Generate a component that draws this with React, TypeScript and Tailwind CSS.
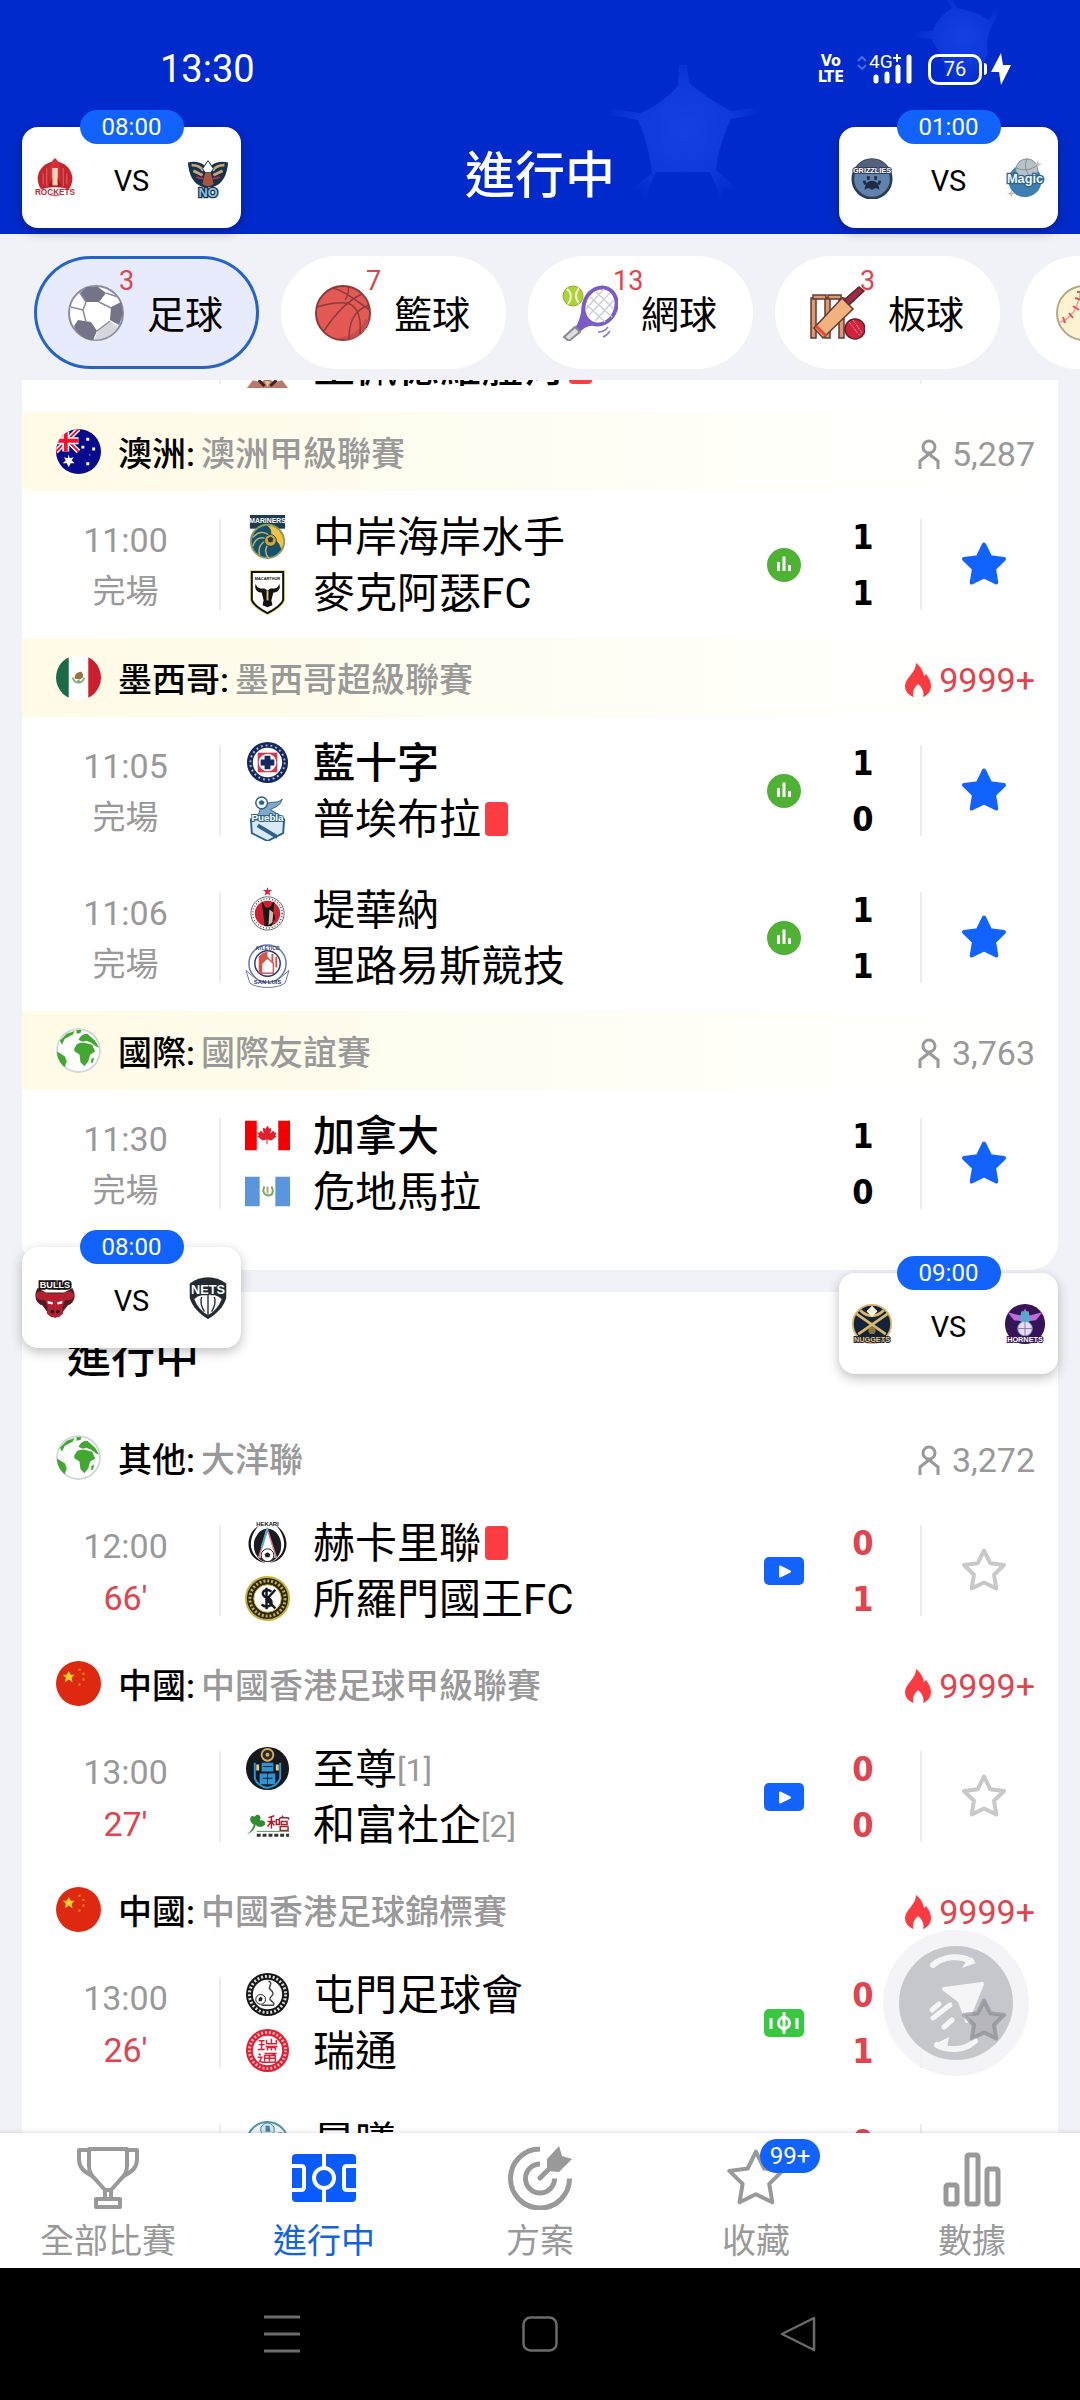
import type { ReactNode } from 'react'

type Team = { name: string; logo: string; bold?: boolean; redCard?: boolean; rank?: number; score: number }
type Match = { time: string; status: string; live?: boolean; media?: 'stats' | 'video' | 'pitch'; starred?: boolean; home: Team; away: Team }
type League = { flag: string; country: string; name: string; fans: string; hot?: boolean; pinned?: boolean; matches: Match[] }

const finished: League[] = [
  {
    flag: 'australia', country: '澳洲', name: '澳洲甲級聯賽', fans: '5,287', pinned: true,
    matches: [
      {
        time: '11:00', status: '完場', media: 'stats', starred: true,
        home: { name: '中岸海岸水手', logo: 'mariners', score: 1 },
        away: { name: '麥克阿瑟FC', logo: 'macarthur', score: 1 },
      },
    ],
  },
  {
    flag: 'mexico', country: '墨西哥', name: '墨西哥超級聯賽', fans: '9999+', hot: true, pinned: true,
    matches: [
      {
        time: '11:05', status: '完場', media: 'stats', starred: true,
        home: { name: '藍十字', logo: 'cruzazul', bold: true, score: 1 },
        away: { name: '普埃布拉', logo: 'puebla', redCard: true, score: 0 },
      },
      {
        time: '11:06', status: '完場', media: 'stats', starred: true,
        home: { name: '堤華納', logo: 'tijuana', score: 1 },
        away: { name: '聖路易斯競技', logo: 'sanluis', score: 1 },
      },
    ],
  },
  {
    flag: 'globe', country: '國際', name: '國際友誼賽', fans: '3,763', pinned: true,
    matches: [
      {
        time: '11:30', status: '完場', starred: true,
        home: { name: '加拿大', logo: 'canada', bold: true, score: 1 },
        away: { name: '危地馬拉', logo: 'guatemala', score: 0 },
      },
    ],
  },
]

const live: League[] = [
  {
    flag: 'globe', country: '其他', name: '大洋聯', fans: '3,272',
    matches: [
      {
        time: '12:00', status: "66'", live: true, media: 'video',
        home: { name: '赫卡里聯', logo: 'hekari', redCard: true, score: 0 },
        away: { name: '所羅門國王FC', logo: 'solomon', score: 1 },
      },
    ],
  },
  {
    flag: 'china', country: '中國', name: '中國香港足球甲級聯賽', fans: '9999+', hot: true,
    matches: [
      {
        time: '13:00', status: "27'", live: true, media: 'video',
        home: { name: '至尊', logo: 'supreme', rank: 1, score: 0 },
        away: { name: '和富社企', logo: 'wofoo', rank: 2, score: 0 },
      },
    ],
  },
  {
    flag: 'china', country: '中國', name: '中國香港足球錦標賽', fans: '9999+', hot: true,
    matches: [
      {
        time: '13:00', status: "26'", live: true, media: 'pitch',
        home: { name: '屯門足球會', logo: 'tuenmun', score: 0 },
        away: { name: '瑞通', logo: 'suitung', score: 1 },
      },
      {
        time: '13:30', status: "1'", live: true,
        home: { name: '晨曦', logo: 'sunhei', score: 0 },
        away: { name: '理文', logo: 'sunhei', score: 0 },
      },
    ],
  },
]

const previousMatch: Match = {
  time: '10:00', status: '完場',
  home: { name: '奧林匹亞', logo: 'pedro', score: 0 },
  away: { name: '聖佩德羅體育', logo: 'pedro', bold: true, redCard: true, score: 0 },
}

const badgeText = { fontFamily: 'Liberation Sans', fontWeight: 700, textAnchor: 'middle' as const }

const logos: Record<string, ReactNode> = {
  mariners: (
    <>
      <rect x="5" y="1" width="36" height="14" fill="#1d3d4d" />
      <text x="23" y="9" fontSize="7" fill="#fff" {...badgeText}>MARINERS</text>
      <circle cx="23" cy="28" r="17" fill="#17506a" stroke="#8b9a63" strokeWidth="2" />
      <path d="M23 12a16 16 0 0 1 14 24c-2-8-8-13-16-10 7-3 8-9 2-14z" fill="#f3c443" />
      <path d="M8 24c5-6 11-7 17-2M8 33c2-8 9-11 15-7M15 42c-2-7 1-13 8-15M24 45c-4-5-4-11 1-15" fill="none" stroke="#b8b46c" strokeWidth="1.500" />
      <circle cx="26" cy="27" r="6" fill="#d9a632" stroke="#1d3d4d" strokeWidth="1" />
      <path d="M26 23l3 2-1 4h-4l-1-4z" fill="#1d3d4d" />
    </>
  ),
  macarthur: (
    <>
      <path d="M6 1h34v29c0 5-8 11-17 15C14 41 6 35 6 30z" fill="#fff" stroke="#e8dd6a" strokeWidth="2" />
      <path d="M7 2h32v28c0 4-8 10-16 14C15 40 7 34 7 30z" fill="none" stroke="#111" strokeWidth="2" />
      <text x="23" y="10" fontSize="4" fill="#111" {...badgeText}>MACARTHUR</text>
      <path d="M11 14c1 5 5 5 9 5l3 2 3-2c4 0 8 0 9-5 2 6-2 9-6 9l-2 8 1 5-5 2-5-2 1-5-2-8c-4 0-8-3-6-9z" fill="#111" />
      <path d="M23 21v10" stroke="#d8b978" strokeWidth="2" />
    </>
  ),
  cruzazul: (
    <>
      <circle cx="23" cy="23" r="21" fill="#14285f" />
      <circle cx="23" cy="23" r="17.500" fill="none" stroke="#a9b3cf" strokeWidth="2" strokeDasharray="2 3" />
      <circle cx="23" cy="23" r="15" fill="#fff" />
      <rect x="13" y="13" width="20" height="20" fill="#d8364a" />
      <circle cx="23" cy="23" r="9" fill="#fff" />
      <path d="M20 16h6v4h4v6h-4v4h-6v-4h-4v-6h4z" fill="#14285f" />
    </>
  ),
  puebla: (
    <>
      <path d="M6 24h34l-1 14-16 8-16-8z" fill="#d9eaf5" stroke="#2c628c" strokeWidth="2" />
      <path d="M13 30l20 12" stroke="#2c628c" strokeWidth="4" />
      <path d="M18 12c7-10 14-2 20-9-2 8-8 8-12 11l10 6H11c6-2 2-7 7-8z" fill="#7fa9c9" stroke="#2c628c" />
      <circle cx="17" cy="7" r="6" fill="#fff" stroke="#2c628c" strokeWidth="1.500" />
      <path d="M17 4l3 2-1 3h-4l-1-3z" fill="#2c628c" />
      <text x="23" y="26" fontSize="10" fill="#fff" stroke="#2c628c" strokeWidth="2" paintOrder="stroke" {...badgeText}>Puebla</text>
    </>
  ),
  tijuana: (
    <>
      <path d="M23 0l1 3h4l-3 2 1 4-3-2-3 2 1-4-3-2h4z" fill="#d32a3b" />
      <circle cx="23" cy="27" r="17" fill="#fff" stroke="#666" />
      <circle cx="23" cy="27" r="15" fill="none" stroke="#555" strokeWidth="1.500" strokeDasharray="1 2" />
      <circle cx="23" cy="27" r="13" fill="#d01f30" />
      <path d="M17 14l4 7h4l5-7-1 11 2 7-4 8h-7l-1-10z" fill="#171717" />
      <path d="M25 23l4 3-1 10-4 3z" fill="#d9b9a7" />
    </>
  ),
  sanluis: (
    <>
      <path d="M1 28l7 6c8 8 22 8 30 0l7-6-4 13c-8 6-28 6-36 0z" fill="#fff" stroke="#6674a8" />
      <circle cx="23" cy="21" r="19" fill="#fff" stroke="#6674a8" strokeWidth="1.500" />
      <circle cx="23" cy="21" r="13" fill="#fff" stroke="#27366f" strokeWidth="1.500" />
      <path d="M14 14a12 12 0 0 1 9-5v22h-9z" fill="#d65549" />
      <path d="M28 11v17M32 14v11" stroke="#d65549" strokeWidth="2" />
      <path d="M17 31V21l6-6 6 6v10z" fill="#fff" stroke="#c95a54" strokeWidth="1.500" />
      <text x="23" y="7" fontSize="5" fill="#27366f" {...badgeText}>ATLÉTICO</text>
      <text x="23" y="42" fontSize="6" fill="#27366f" {...badgeText}>SAN LUIS</text>
    </>
  ),
  canada: (
    <>
      <rect x="0" y="8" width="46" height="30" fill="#fff" />
      <path d="M0 8h12v30H0zM34 8h12v30H34z" fill="#f40000" />
      <path d="M23 13l2 3 2-1-1 6 3-3 1 2 2 0-1 3 1 1-5 4-4-1v5h-1v-5l-4 1-5-4 1-1-1-3h2l1-2 3 3-1-6 3 1z" fill="#e0202a" />
    </>
  ),
  guatemala: (
    <>
      <rect x="0" y="8" width="46" height="30" fill="#fff" />
      <path d="M0 8h15v30H0zM31 8h15v30H31z" fill="#5b95dc" />
      <path d="M20 18c-3 5 0 9 4 9s6-4 3-9" fill="none" stroke="#7aa75b" strokeWidth="2" />
      <path d="M23 18v7" stroke="#b9a26a" strokeWidth="2" />
    </>
  ),
  hekari: (
    <>
      <path d="M15 5C-2 15 0 41 21 44-2 34 6 13 15 5zM31 5c17 10 15 36-6 39C48 34 40 13 31 5z" fill="#161616" />
      <ellipse cx="23" cy="26" rx="14" ry="17" fill="#1c1b22" />
      <path d="M23 10l9 28H14z" fill="#fff" stroke="#d77b8b" strokeWidth="1.500" />
      <path d="M23 8l-6 20" stroke="#43b7cc" strokeWidth="2" />
      <circle cx="23" cy="36" r="6.500" fill="#fff" stroke="#222" />
      <path d="M23 33l3 2-1 3h-4l-1-3z" fill="#222" />
      <text x="23" y="6" fontSize="6" fill="#111" {...badgeText}>HEKARI</text>
    </>
  ),
  solomon: (
    <>
      <circle cx="23" cy="23" r="22" fill="#2b2812" stroke="#c6b23b" strokeWidth="2" />
      <circle cx="23" cy="23" r="18" fill="none" stroke="#c6b23b" strokeWidth="3" strokeDasharray="2 2" />
      <circle cx="23" cy="23" r="14" fill="#fff" stroke="#c6b23b" />
      <path d="M27 16c-5-4-11 0-8 4 2 3 7 2 8 6 1 5-6 7-10 3M22 12v22M31 14l-9 10 9 9" fill="none" stroke="#16181f" strokeWidth="2.500" />
    </>
  ),
  supreme: (
    <>
      <circle cx="23" cy="23" r="22" fill="#15181c" />
      <circle cx="23" cy="9" r="6" fill="#30291d" stroke="#d5ad6a" strokeWidth="2" />
      <circle cx="23" cy="9" r="2" fill="#d5ad6a" />
      <path d="M10 17v16c2 6 8 9 13 10 5-1 11-4 13-10V17" fill="none" stroke="#2c95d9" strokeWidth="2" />
      <path d="M17 17h12v9H17zM15 28h16v11H15z" fill="#2c95d9" />
      <path d="M13 19v6M33 19v6" stroke="#e9c98a" strokeWidth="3" />
      <path d="M18 21h10M18 33h10M23 28v11" stroke="#15181c" />
    </>
  ),
  wofoo: (
    <>
      <path d="M9 23C3 20 5 12 10 15c2-4 8-1 5 4 5-2 8 4 3 6-3 1-6 0-7-2-1 5-4 8-9 10 4-3 6-6 7-10z" fill="#2f8b2e" />
      <path d="M24 16l6-2M27 15v12M23 20h8M27 20l-4 5M27 20l3 4M32 18h3v5h-3zM38 14l1 2M35 18l1-2h8l1 2M37 20h6v3h-6zM36 25h8v4h-8z" fill="none" stroke="#a3202c" strokeWidth="1.500" />
      <path d="M12 30h33" stroke="#5b8f4a" />
      <path d="M12 34h33" stroke="#333" strokeWidth="3" strokeDasharray="4 2" />
    </>
  ),
  tuenmun: (
    <>
      <circle cx="23" cy="23" r="22" fill="#151515" />
      <circle cx="23" cy="23" r="18.500" fill="none" stroke="#ddd" strokeWidth="3" strokeDasharray="2 2" />
      <circle cx="23" cy="23" r="15" fill="#fff" />
      <path d="M24 9c6 3-2 6 2 9s3 5 0 8 6 5 3 8H17" fill="none" stroke="#444" strokeWidth="1.500" />
      <circle cx="16" cy="28" r="5" fill="#fff" stroke="#222" />
      <path d="M16 25l2 2-1 3h-3v-3z" fill="#222" />
    </>
  ),
  suitung: (
    <>
      <circle cx="23" cy="23" r="22" fill="#df1f31" />
      <circle cx="23" cy="23" r="18.500" fill="none" stroke="#f4b4ba" strokeWidth="3" strokeDasharray="2 2" />
      <circle cx="23" cy="23" r="15" fill="#fff" />
      <path d="M14 13h6M14 17h6M13 22h7M17 13v9M22 12v4h10v-4M27 11v5M21 19h12M23 23v-3h8v3M27 19v4" fill="none" stroke="#df1f31" strokeWidth="1.500" />
      <path d="M14 26l2 2M13 30h4l-2 4 3 1h15M20 26h11l-3 2M20 34v-6h11v6M20 31h11M25 28v6" fill="none" stroke="#df1f31" strokeWidth="1.500" />
    </>
  ),
  sunhei: (
    <>
      <circle cx="23" cy="24" r="21" fill="#eef6fb" stroke="#4d93ad" strokeWidth="2" />
      <circle cx="23" cy="11" r="7" fill="#cfe2ee" stroke="#4d7f9c" />
      <path d="M21 7h4l1 6h-5z" fill="#4d7f9c" />
      <path d="M18 18c8-4 12-3 22-5-8 3-12 8-20 10z" fill="#d23c44" />
    </>
  ),
  pedro: (
    <>
      <path d="M2 45l6-8 8 2 7-4 7 4 8-2 6 8z" fill="#b9786a" />
      <path d="M14 37l6 6M32 37l-6 6" stroke="#3c2323" strokeWidth="3" />
      <path d="M20 38h6l-3 6z" fill="#e9c08f" />
    </>
  ),
  rockets: (
    <>
      <circle cx="23" cy="24" r="19" fill="#c4262f" />
      <path d="M14 12v20M32 12v20M10 18v12M36 18v12" stroke="#e46c6c" />
      <path d="M23 1c6 5 7 13 5 30H18c-2-17-1-25 5-30z" fill="#d5303a" />
      <path d="M20 12h6v19h-6z" fill="#f1d9b8" />
      <path d="M16 32l4-9v10zM30 32l-4-9v10z" fill="#9c1c27" />
      <path d="M4 42c10-6 28-6 38 0" fill="none" stroke="#fff" strokeWidth="9" />
      <text x="23" y="42" fontSize="9" fill="#c4262f" {...badgeText}>ROCKETS</text>
    </>
  ),
  pelicans: (
    <>
      <path d="M1 6c8-2 14 0 18 3l4-5 4 5c4-3 10-5 18-3-1 14-6 24-17 27h-10C7 30 2 20 1 6z" fill="#17324f" />
      <path d="M5 9c6 0 10 2 13 6M41 9c-6 0-10 2-13 6M7 15l10 5M39 15l-10 5" stroke="#c9a878" strokeWidth="3" />
      <path d="M10 22l8 2M36 22l-8 2" stroke="#b93143" strokeWidth="2" />
      <path d="M23 4l6 9-3 4h-6l-3-4z" fill="#fff" stroke="#17324f" />
      <path d="M20 17h6l3 12c-2 4-10 4-12 0z" fill="#a9543f" />
      <text x="23" y="44" fontSize="14" fill="#8fc1e3" stroke="#17324f" strokeWidth="3" paintOrder="stroke" {...badgeText}>NO</text>
    </>
  ),
  grizzlies: (
    <>
      <circle cx="23" cy="24" r="21" fill="#5f83ad" stroke="#2f3c55" strokeWidth="3" />
      <path d="M5 12C14-1 32-1 41 12z" fill="#55617c" />
      <text x="23" y="17" fontSize="8" fill="#fff" stroke="#2f3c55" strokeWidth="2" paintOrder="stroke" {...badgeText}>GRIZZLIES</text>
      <path d="M15 36c0-6 3-10 8-10s8 4 8 10l-4-2-4 2-4-2z" fill="#1f2b44" />
      <path d="M14 26l2 4M19 21v4M27 21v4M32 26l-2 4" stroke="#1f2b44" strokeWidth="3" />
    </>
  ),
  magic: (
    <>
      <circle cx="23" cy="26" r="18" fill="#3d7fb0" />
      <circle cx="25" cy="14" r="12" fill="#b8c2c8" stroke="#7d8d98" />
      <path d="M14 12c8 4 16 2 22-3M25 2c-3 8-1 16 6 22" fill="none" stroke="#7d8d98" />
      <text x="23" y="29" fontSize="14" fill="#eef5fa" stroke="#2c6595" strokeWidth="3" paintOrder="stroke" {...badgeText}>Magic</text>
      <path d="M37 3l1 4 4 1-4 1-1 4-1-4-4-1 4-1zM8 35l1 4 4 1-4 1-1 4-1-4-4-1 4-1z" fill="#cdb9b9" />
    </>
  ),
  bulls: (
    <>
      <path d="M4 12C-2 22 4 30 9 31l6 8 8 6 8-6 6-8c5-1 11-9 5-19l-9 5H13z" fill="#5b1722" />
      <path d="M2 20c2-6 8-4 13-2h16c5-2 11-4 13 2-1 5-6 6-10 5l-3 8 1 7-5 4h-8l-5-4 1-7-3-8c-4 1-9 0-10-5z" fill="#b3202f" />
      <path d="M15 26l6 2-1 2-5-1zM31 26l-6 2 1 2 5-1z" fill="#fff" />
      <circle cx="20" cy="38" r="2" fill="#2b0b10" />
      <circle cx="26" cy="38" r="2" fill="#2b0b10" />
      <text x="23" y="12" fontSize="10" fill="#fff" stroke="#1d1114" strokeWidth="4" paintOrder="stroke" {...badgeText}>BULLS</text>
    </>
  ),
  nets: (
    <>
      <path d="M3 7c12-9 28-9 40 0v16c-3 10-10 17-20 23C13 40 6 33 3 23z" fill="#222b2f" />
      <path d="M8 24c9-7 21-7 30 0-3 8-8 14-15 18C16 38 11 32 8 24z" fill="#fff" />
      <path d="M23 20v22M16 22c-2 6 0 11 3 16M30 22c2 6 0 11-3 16" fill="none" stroke="#222b2f" strokeWidth="1.500" />
      <text x="23" y="19" fontSize="14" fill="#fff" stroke="#222b2f" strokeWidth="3" paintOrder="stroke" {...badgeText}>NETS</text>
    </>
  ),
  nuggets: (
    <>
      <circle cx="23" cy="23" r="21" fill="#14223a" stroke="#d8b96b" strokeWidth="2" />
      <path d="M6 12l32 22M40 12L8 34" stroke="#d8b96b" strokeWidth="3" />
      <path d="M10 8c8 8 18 8 26 0" fill="none" stroke="#d8b96b" strokeWidth="3" />
      <path d="M23 3l6 6-6 6-6-6z" fill="#fbf3d9" />
      <circle cx="23" cy="30" r="4" fill="#8a7440" />
      <text x="23" y="43" fontSize="8" fill="#e6ca85" stroke="#14223a" strokeWidth="2" paintOrder="stroke" {...badgeText}>NUGGETS</text>
    </>
  ),
  hornets: (
    <>
      <circle cx="23" cy="23" r="22" fill="#371358" />
      <path d="M4 10l15 4 4-8 4 8 15-4-7 9-9 1h-6l-9-1z" fill="#c06cd8" />
      <path d="M19 9h8l2 10-6 6-6-6z" fill="#5aa9c9" />
      <circle cx="23" cy="28" r="8" fill="#eadcf3" stroke="#5aa9c9" />
      <path d="M15 28h16M23 20v16" stroke="#8e6cae" />
      <text x="23" y="43" fontSize="8" fill="#fff" stroke="#371358" strokeWidth="2" paintOrder="stroke" {...badgeText}>HORNETS</text>
    </>
  ),
}

function Logo({ name, className }: { name: string; className: string }) {
  return (
    <svg viewBox="0 0 46 46" className={className} aria-hidden="true">
      {logos[name]}
    </svg>
  )
}

const flags: Record<string, ReactNode> = {
  australia: (
    <>
      <rect width="46" height="46" fill="#0a0a8c" />
      <path d="M0 0l23 23M23 0L0 23" stroke="#fff" strokeWidth="5" />
      <path d="M0 0l23 23M23 0L0 23" stroke="#f0122d" strokeWidth="2" />
      <path d="M0 12h23M10 0v23" stroke="#fff" strokeWidth="7" />
      <path d="M0 12h23M10 0v23" stroke="#f0122d" strokeWidth="4" />
      <path d="M13 26l1 4 4-1-2 3 3 3-4 0-2 4-2-4-4 0 3-3-2-3 4 1z" fill="#fff" />
      <path d="M31 9h3v3h-3zM26 17h3v3h-3zM37 19h3v3h-3zM31 34h3v3h-3zM34 26h1v1h-1z" fill="#fff" />
    </>
  ),
  mexico: (
    <>
      <rect width="46" height="46" fill="#fff" />
      <rect width="13" height="46" fill="#1c6b47" />
      <rect x="33" width="13" height="46" fill="#cd1e2e" />
      <path d="M17 23c2 7 10 7 12 0" fill="none" stroke="#8fb07a" strokeWidth="2" />
      <path d="M19 24c0-5 3-7 7-7 3 3 2 7-2 8z" fill="#9a7440" />
      <circle cx="23" cy="27" r="1.500" fill="#5fa8a0" />
    </>
  ),
  china: (
    <>
      <rect width="46" height="46" fill="#de2910" />
      <path d="M13 10l2 4h4l-3 3 1 5-4-3-4 3 1-5-3-3h4z" fill="#ffcc29" />
      <path d="M23 8h2v2h-2zM27 12h2v2h-2zM27 18h2v2h-2zM23 23h2v2h-2z" fill="#f5a51d" />
    </>
  ),
  globe: (
    <>
      <circle cx="23" cy="23" r="22" fill="#fff" stroke="#d2d5dc" strokeWidth="2" />
      <path d="M20 19c1-4 5-4 9-4l8 2 3 7-5 3-2 7-4 5-4-4-1-8-5-3c-1-2 0-4 1-5z" fill="#43a832" />
      <path d="M23 12c2-4 5-6 9-6l8 7 4 7-3-1-5-4-5-2-4 1z" fill="#43a832" />
      <path d="M1 24l8 5 2 5-2 6C4 36 1 30 1 24zM4 13l7-7 8-3-2 4-8 4-3 6zM21 2h5l-1 3-4 1z" fill="#43a832" />
      <path d="M36 32l3-2-1 5-2 1z" fill="#43a832" />
    </>
  ),
}

function Flag({ name }: { name: string }) {
  return (
    <svg viewBox="0 0 46 46" className="size-[45px] shrink-0 rounded-full" aria-hidden="true">
      {flags[name]}
    </svg>
  )
}

const starPath = 'M24 3.500l6.200 12.700L44 18l-10 9.700 2.300 13.800L24 35.500l-12.300 6L14 27.700 4 18l13.800-1.800z'

function Star({ filled }: { filled?: boolean }) {
  return (
    <svg viewBox="0 0 48 48" className="size-12" fill={filled ? '#1263fe' : 'none'} stroke={filled ? '#1263fe' : 'currentColor'} strokeWidth="4" strokeLinejoin="round" aria-hidden="true">
      <path d={starPath} />
    </svg>
  )
}

function Media({ kind }: { kind?: Match['media'] }) {
  if (kind === 'stats') {
    return (
      <svg viewBox="0 0 34 34" className="size-[34px]" aria-hidden="true">
        <circle cx="17" cy="17" r="17" fill="#4fb235" />
        <path d="M11.500 14v9M17 8.500V23M22.500 17v6" stroke="#fff" strokeWidth="3" />
      </svg>
    )
  }
  if (kind === 'video') {
    return (
      <svg viewBox="0 0 40 28" className="h-7 w-10" aria-hidden="true">
        <rect width="40" height="28" rx="5" fill="#1263fe" />
        <path d="M16 9.500v10l10-5z" fill="#fff" stroke="#fff" strokeWidth="2" strokeLinejoin="round" />
      </svg>
    )
  }
  if (kind === 'pitch') {
    return (
      <svg viewBox="0 0 40 28" className="h-7 w-10" aria-hidden="true">
        <rect width="40" height="28" rx="5" fill="#36c940" />
        <g fill="none" stroke="#fff" strokeWidth="3">
          <circle cx="20" cy="14" r="5.500" />
          <path d="M20 3v22M7 9v11M33 9v11" />
        </g>
      </svg>
    )
  }
  return null
}

function LeagueHeader({ league }: { league: League }) {
  const tint = league.pinned ? 'bg-linear-to-r from-[#fffbe6] to-white' : ''
  return (
    <div className={`flex h-[79px] items-center pr-[23px] pl-[34px] ${tint}`}>
      <Flag name={league.flag} />
      <h3 className="ml-[17px] flex gap-1.5 pt-1 text-[34px] leading-[44px] font-medium whitespace-nowrap text-black">
        <span>{league.country}:</span>
        <span className="text-[#999]">{league.name}</span>
      </h3>
      <div className={`ml-auto flex items-center pt-1 text-[34px] leading-[44px] ${league.hot ? 'gap-2 text-[#e0444e]' : 'gap-3 text-[#999]'}`}>
        {league.hot ? (
          <svg viewBox="0 0 26 34" className="h-[34px] w-[26px]" fill="#fb3a41" aria-hidden="true">
            <path d="M11 0c5 4 7 8 8 13l2-2c3 4 5 8 5 12 0 5-3 9-8 11 2-5-2-11-5-13-3 3-7 8-4 13-6-2-9-6-9-11C0 15 11 10 11 0z" />
          </svg>
        ) : (
          <svg viewBox="0 0 22 30" className="h-[30px] w-[22px]" fill="none" stroke="currentColor" strokeWidth="3" aria-hidden="true">
            <circle cx="11" cy="8" r="6" />
            <path d="M2 30v-8l9-7 9 7v8" />
          </svg>
        )}
        <span>{league.fans}</span>
      </div>
    </div>
  )
}

function TeamLine({ team }: { team: Team }) {
  return (
    <div className="flex h-14 items-center">
      <Logo name={team.logo} className="size-[45px] shrink-0" />
      <span className={`ml-[23px] pt-0.5 text-[42px] leading-[56px] whitespace-nowrap text-black ${team.bold ? 'font-medium' : ''}`}>{team.name}</span>
      {team.redCard && <span className="ml-1 h-[34px] w-[23px] rounded-sm bg-[#fe3d42]" />}
      {team.rank && <span className="pt-0.5 text-[32px] text-[#999]">[{team.rank}]</span>}
    </div>
  )
}

function MatchRow({ match }: { match: Match }) {
  return (
    <article className="flex h-[147px] shrink-0 items-center">
      <div className="w-[197px] pt-0.5 pl-2.5 text-center text-[34px] leading-[52px] text-[#999]">
        <p>{match.time}</p>
        <p className={match.live ? 'text-[#e0444e]' : 'text-[33px]'}>{match.status}</p>
      </div>
      <div className="h-[91px] w-0.5 bg-[#ededed]" />
      <div className="ml-6 flex-1">
        <TeamLine team={match.home} />
        <TeamLine team={match.away} />
      </div>
      <div className="flex w-[45px] justify-center">
        <Media kind={match.media} />
      </div>
      <div className={`w-[114px] pt-px text-center font-['DejaVu_Sans_Condensed','DejaVu_Sans',sans-serif] text-[34px] leading-[56px] font-bold ${match.live ? 'text-[#e0444e]' : 'text-black'}`}>
        <p>{match.home.score}</p>
        <p>{match.away.score}</p>
      </div>
      <div className="h-[91px] w-0.5 bg-[#ededed]" />
      <button type="button" aria-label="收藏" aria-pressed={!!match.starred} className="mr-3 flex w-[124px] justify-center text-[#c8c8c8]">
        <Star filled={match.starred} />
      </button>
    </article>
  )
}

function LeagueBlock({ league }: { league: League }) {
  return (
    <section>
      <LeagueHeader league={league} />
      {league.matches.map((match) => (
        <MatchRow key={match.home.name} match={match} />
      ))}
    </section>
  )
}

function FloatingMatch({ time, home, away, className }: { time: string; home: string; away: string; className: string }) {
  return (
    <a href="#match" className={`absolute z-20 flex h-[101px] w-[219px] items-center justify-between rounded-2xl bg-white px-3 shadow-[0_4px_12px_rgba(0,0,0,0.25)] ${className}`}>
      <span className="absolute -top-[17px] left-1/2 h-[34px] w-[104px] -translate-x-1/2 rounded-full bg-[#1263fe] text-center text-2xl leading-[34px] text-white">{time}</span>
      <Logo name={home} className="size-[42px]" />
      <span className="pt-1.5 text-[29px] leading-[34px] text-black">VS</span>
      <Logo name={away} className="size-[42px]" />
    </a>
  )
}

const sports = [
  {
    label: '足球', count: '3', active: true,
    icon: (
      <>
        <circle cx="28" cy="28" r="27" fill="#fff" stroke="#8b8c9f" strokeWidth="2" />
        <path d="M12 8l7-6 11 0 8 6-7 9H18zM43 22l10-5 2 12-4 11-9-5zM6 41l4-6 13 2 6 9-4 9C17 55 9 49 6 41z" fill="#737488" />
        <path d="M30 46l12-10 8 6c-5 8-13 12-24 13z" fill="#d5d6de" />
        <path d="M18 17l-3 8 3 12M31 17l12 6M15 25L3 22M29 46l13-10M18 17l-6-9M38 8l12 4" fill="none" stroke="#8b8c9f" strokeWidth="1.500" />
      </>
    ),
  },
  {
    label: '籃球', count: '7',
    icon: (
      <>
        <circle cx="28" cy="28" r="27" fill="#e35a55" stroke="#8c3b3c" strokeWidth="2" />
        <path d="M50 34c-4 11-14 18-28 19 14 5 29-3 32-18z" fill="#c94b4c" />
        <path d="M2 22c18-5 32-6 37 0 6 6 7 16 6 27M9 46C22 26 36 14 47 9M18 3c15 4 25 15 37 22M34 54c0-16 4-28 20-34M33 2c1 5 0 9-3 13" fill="none" stroke="#8c3b3c" strokeWidth="1.500" />
      </>
    ),
  },
  {
    label: '網球', count: '13',
    icon: (
      <>
        <circle cx="11" cy="11" r="10" fill="#aed136" stroke="#8fb02a" />
        <path d="M5 4c5 4 5 10 1 15M17 3c-4 5-4 11 0 15" fill="none" stroke="#f2f8d5" strokeWidth="2" />
        <ellipse cx="38" cy="21" rx="16" ry="19" transform="rotate(25 38 21)" fill="#fff" stroke="#7b5cc4" strokeWidth="4" />
        <path d="M28 12l22 20M34 7l18 17M25 20l18 17M48 8L27 30M52 15L33 36M42 4L24 24" stroke="#ccd1d6" strokeWidth="1.500" />
        <path d="M20 20c0 8 6 17 17 20-9 0-15 2-20 8l-5-4c5-6 7-14 8-24z" fill="#7b5cc4" />
        <path d="M13 42l5 5-11 9-5-4z" fill="#dcdde0" stroke="#88898e" strokeWidth="2" />
        <path d="M36 47c5 0 8-2 10-5M41 52c3-1 5-3 7-6" fill="none" stroke="#8e76cd" strokeWidth="1.500" />
      </>
    ),
  },
  {
    label: '板球', count: '3',
    icon: (
      <>
        <g fill="#e0986c" stroke="#5d3a35" strokeWidth="1.500">
          <path d="M2 13h5v40H2zM16 13h5v40h-5zM30 13h5v40h-5z" />
          <path d="M4 10h13v4H4zM19 10h13v4H19z" />
        </g>
        <path d="M50 2l5 4-15 14-5-5z" fill="#9c2e44" stroke="#5d2030" strokeWidth="1.500" />
        <path d="M33 13l11 11-30 29-9-10z" fill="#f2b27e" stroke="#5d3a35" strokeWidth="1.500" />
        <path d="M7 41l10 10" stroke="#e2483c" strokeWidth="3" />
        <circle cx="46" cy="44" r="10" fill="#d3233c" stroke="#5d2030" strokeWidth="1.500" />
        <path d="M40 37l11 14M44 35l9 13" stroke="#f0a3a8" strokeDasharray="2 1" />
      </>
    ),
  },
  {
    label: '棒球', count: '2',
    icon: (
      <>
        <circle cx="28" cy="28" r="27" fill="#fdf3d3" stroke="#b3a982" strokeWidth="2" />
        <path d="M4 37c10-3 19-13 21-35" fill="none" stroke="#e9a9a0" strokeWidth="1.500" />
        <path d="M7 32l2 6M13 28l4 5M17 21l6 4M19 13l7 2M21 7l6 0" stroke="#d55b5b" strokeWidth="2" />
      </>
    ),
  },
]

function SportTabs() {
  return (
    <div role="tablist" className="flex gap-[22px] overflow-hidden pt-[22px] pb-[11px] pl-[34px]">
      {sports.map((sport) => (
        <button
          key={sport.label}
          type="button"
          role="tab"
          aria-selected={!!sport.active}
          className={`relative flex h-[113px] w-[225px] shrink-0 items-center rounded-full pl-[34px] ${sport.active ? 'bg-[#e8ebfb] inset-ring-3 inset-ring-[#2463c8]' : 'bg-white'}`}
        >
          <svg viewBox="0 0 56 56" className="size-14" aria-hidden="true">{sport.icon}</svg>
          <span className="absolute top-3 left-[85px] text-[27px] leading-[27px] text-[#e0444e]">{sport.count}</span>
          <span className="ml-[23px] pt-1 text-[38px] leading-[50px] text-black">{sport.label}</span>
        </button>
      ))}
    </div>
  )
}

function StatusBar() {
  return (
    <div className="flex items-start justify-between pt-[47px] pr-[69px] pl-[160px] text-white">
      <span className="text-[38px] leading-[44px]">13:30</span>
      <div className="mt-1.5 flex items-center">
        <span className="flex flex-col items-center font-['DejaVu_Sans_Condensed','DejaVu_Sans',sans-serif] text-base leading-4 font-bold">
          <span>Vo</span>
          <span>LTE</span>
        </span>
        <svg viewBox="0 0 56 32" className="ml-3 h-8 w-14 overflow-visible" aria-hidden="true">
          <path d="M2 8l4-4 4 4M2 12l4 4 4-4" fill="none" stroke="#4a6be0" strokeWidth="2" />
          <text x="13" y="15" fontSize="19" fill="#fff" fontFamily="Roboto">4G</text>
          <path d="M37 5h8M41 1v8" stroke="#fff" strokeWidth="2" />
          <path d="M20 28v-4M31 28v-7M42 28V14M53 28V4" stroke="#fff" strokeWidth="5" strokeLinecap="round" />
        </svg>
        <div className="ml-[16px] flex h-[31px] w-[54px] items-center justify-center rounded-[10px] border-3 border-white text-xl leading-5">76</div>
        <div className="ml-0.5 h-3 w-[3px] rounded-r bg-white" />
        <svg viewBox="0 0 20 32" className="ml-1 h-8 w-5" fill="#fff" aria-hidden="true">
          <path d="M10 0L0 19h8l2 13 10-20h-8z" />
        </svg>
      </div>
    </div>
  )
}

const navItems = [
  {
    label: '全部比賽',
    icon: (
      <g fill="none" stroke="currentColor" strokeWidth="4" strokeLinejoin="round">
        <path d="M13 3h38v17c0 7-3 10-7 14l-9 10h-6L20 34c-4-4-7-7-7-14z" />
        <path d="M13 4H3v9c0 8 4 12 13 17M51 4h10v9c0 8-4 12-13 17M29 44v8M35 44v8M20 53h24v8H20z" />
      </g>
    ),
  },
  {
    label: '進行中', active: true,
    icon: (
      <>
        <rect y="8" width="64" height="48" rx="4" fill="#0a5bff" />
        <g fill="none" stroke="#fff" strokeWidth="4">
          <path d="M32 8v14M32 42v14M0 20h9c2 0 3 1 3 3v18c0 2-1 3-3 3H0M64 20h-9c-2 0-3 1-3 3v18c0 2 1 3 3 3h9" />
          <circle cx="32" cy="32" r="10" />
        </g>
      </>
    ),
  },
  {
    label: '方案',
    icon: (
      <>
        <g fill="none" stroke="currentColor" strokeWidth="5">
          <path d="M32 3a29.500 29.500 0 1 0 29.500 29.500M32 18a14.500 14.500 0 1 0 14.500 14.500" />
          <path d="M32 32l14-14" strokeLinecap="round" />
        </g>
        <path d="M39 13L51 0l3 10 10 3-13 13-12-1z" fill="currentColor" />
      </>
    ),
  },
  {
    label: '收藏', badge: '99+',
    icon: (
      <g transform="translate(0 1) scale(1.330)">
        <path d={starPath} fill="none" stroke="currentColor" strokeWidth="3" strokeLinejoin="round" />
      </g>
    ),
  },
  {
    label: '數據',
    icon: (
      <g fill="none" stroke="currentColor" strokeWidth="5">
        <rect x="6" y="39" width="11" height="19" rx="2" />
        <rect x="27" y="9" width="11" height="49" rx="2" />
        <rect x="47" y="23" width="11" height="35" rx="2" />
      </g>
    ),
  },
]

function BottomNav() {
  return (
    <nav className="relative z-10 grid grid-cols-5 bg-white pt-[13px] pb-0.5 shadow-[0_-1px_4px_rgba(0,0,0,0.12)]">
      {navItems.map((item) => (
        <a key={item.label} href="#nav" className={`flex flex-col items-center ${item.active ? 'text-[#1263e0]' : 'text-[#999]'}`}>
          <span className="relative">
            <svg viewBox="0 0 64 64" className="size-16" aria-hidden="true">{item.icon}</svg>
            {item.badge && (
              <span className="absolute -top-[7px] left-9 h-[34px] w-[60px] rounded-full bg-[#1263fe] text-center text-2xl leading-[34px] text-white">{item.badge}</span>
            )}
          </span>
          <span className="mt-1.5 text-[34px] leading-[50px]">{item.label}</span>
        </a>
      ))}
    </nav>
  )
}

function SystemNav() {
  return (
    <div className="flex h-[132px] items-center justify-center gap-[222px] bg-black">
      <button type="button" aria-label="選單">
        <svg viewBox="0 0 36 38" className="h-[38px] w-9" stroke="#6b6b6b" strokeWidth="3" aria-hidden="true">
          <path d="M0 2h36M0 19h36M0 36h36" />
        </svg>
      </button>
      <button type="button" aria-label="主畫面">
        <svg viewBox="0 0 36 36" className="size-9" fill="none" stroke="#6b6b6b" strokeWidth="2.500" aria-hidden="true">
          <rect x="1.500" y="1.500" width="33" height="33" rx="7" />
        </svg>
      </button>
      <button type="button" aria-label="返回">
        <svg viewBox="0 0 36 36" className="size-9" fill="none" stroke="#6b6b6b" strokeWidth="2.500" strokeLinejoin="round" aria-hidden="true">
          <path d="M34 2v32L2 18z" />
        </svg>
      </button>
    </div>
  )
}

function HeaderPattern() {
  return (
    <svg viewBox="0 0 1080 234" preserveAspectRatio="xMidYMid slice" className="absolute inset-0 size-full" aria-hidden="true">
      <defs>
        <radialGradient id="glow" cx="683" cy="130" r="80" gradientUnits="userSpaceOnUse">
          <stop offset="0" stopColor="#1641e2" />
          <stop offset="0.600" stopColor="#1641e2" stopOpacity="0.700" />
          <stop offset="1" stopColor="#1641e2" stopOpacity="0" />
        </radialGradient>
        <radialGradient id="glow2" cx="962" cy="38" r="50" gradientUnits="userSpaceOnUse">
          <stop offset="0" stopColor="#1641e2" />
          <stop offset="0.600" stopColor="#1641e2" stopOpacity="0.600" />
          <stop offset="1" stopColor="#1641e2" stopOpacity="0" />
        </radialGradient>
      </defs>
      <path d="M679 65h8l2 18q22 18 42 28l34-5v7l-34 6q-12 24-15 51l18 16 22 5-20 1-14-5 2 36-7-35-7-16h-54l-8 18-7 34 1-35-14 6-18 0 22-6 20-16q-3-28-14-53l-34-6v-6l36 5q22-9 38-27z" fill="url(#glow)" />
      <path d="M947 0h6l4 8q18 3 32 12l10-20h6l-12 24q-8 14-5 29l-12 30h-26l-10-30q-6-8-8-14l-24-2v-5l24-1q6-14 20-23z" fill="url(#glow2)" />
    </svg>
  )
}

export default function App() {
  return (
    <div className="relative flex h-screen flex-col overflow-hidden bg-[#f1f2f7] font-['Roboto','Noto_Sans_CJK_TC',sans-serif]">
      <header className="relative h-[234px] bg-[#002acb]">
        <HeaderPattern />
        <div className="relative">
          <StatusBar />
          <h1 className="mt-[53px] text-center text-[50px] leading-[64px] font-medium text-white">進行中</h1>
        </div>
      </header>

      <SportTabs />

      <main className="relative min-h-0 flex-1 overflow-hidden px-[22px]">
        <div className="rounded-b-[28px] bg-white pb-[33px]">
          <div className="flex h-8 flex-col justify-end overflow-hidden">
            <MatchRow match={previousMatch} />
          </div>
          {finished.map((league) => (
            <LeagueBlock key={league.name} league={league} />
          ))}
        </div>

        <div className="mt-[22px] bg-white pt-1.5">
          <h2 className="pl-[45px] text-[44px] leading-[120px] font-medium text-black">進行中</h2>
          {live.map((league) => (
            <LeagueBlock key={league.name} league={league} />
          ))}
        </div>
      </main>

      <BottomNav />
      <SystemNav />

      <FloatingMatch time="08:00" home="rockets" away="pelicans" className="top-[127px] left-[22px]" />
      <FloatingMatch time="01:00" home="grizzlies" away="magic" className="top-[127px] right-[22px]" />
      <FloatingMatch time="08:00" home="bulls" away="nets" className="top-[1247px] left-[22px]" />
      <FloatingMatch time="09:00" home="nuggets" away="hornets" className="top-[1273px] right-[22px]" />

      <button type="button" aria-label="切換推送" className="absolute right-[51px] bottom-[324px] z-20">
        <svg viewBox="0 0 146 146" className="size-[146px]" aria-hidden="true">
          <circle cx="73" cy="73" r="73" fill="#f1f1f6" fillOpacity="0.800" />
          <circle cx="73" cy="73" r="57" fill="#b7b8be" fillOpacity="0.750" />
          <path d="M50 35c10-9 26-10 38-4M54 115c10 6 28 6 38-4" fill="none" stroke="#f5f5f8" strokeWidth="6" strokeLinecap="round" />
          <path d="M79 38l14-5-7-6zM66 107l-14 7 12 4z" fill="#f5f5f8" />
          <path d="M61 59l38-5-15 37-7-20z" fill="#f5f5f8" stroke="#f5f5f8" strokeWidth="4" strokeLinejoin="round" />
          <path d="M49 80l7-6M50 88l17-13M61 97l8-7" stroke="#f5f5f8" strokeWidth="5" strokeLinecap="round" />
          <g transform="translate(77 67)" fill="#a5a6ac" fillOpacity="0.500" stroke="#86878e" strokeOpacity="0.600" strokeWidth="4" strokeLinejoin="round">
            <path d={starPath} />
          </g>
        </svg>
      </button>
    </div>
  )
}
